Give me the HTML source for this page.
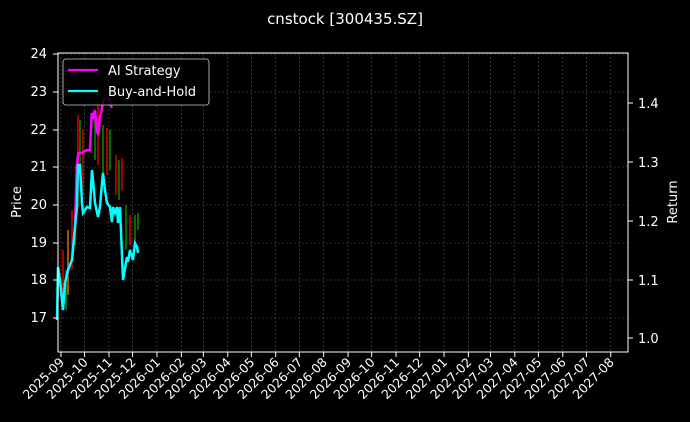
<html><head><style>body{margin:0;background:#000;}svg{display:block}</style></head><body>
<svg width="690" height="422" xmlns="http://www.w3.org/2000/svg" font-family="'DejaVu Sans','Liberation Sans',sans-serif" fill="#fff">
<rect width="690" height="422" fill="#000"/>
<text x="345" y="24" font-size="15" text-anchor="middle">cnstock [300435.SZ]</text>
<g stroke="#555" stroke-width="0.6" stroke-dasharray="2,2">
<line x1="58" x2="628" y1="54" y2="54"/><line x1="58" x2="628" y1="92" y2="92"/><line x1="58" x2="628" y1="130" y2="130"/><line x1="58" x2="628" y1="167" y2="167"/><line x1="58" x2="628" y1="205" y2="205"/><line x1="58" x2="628" y1="243" y2="243"/><line x1="58" x2="628" y1="280" y2="280"/><line x1="58" x2="628" y1="318" y2="318"/>
</g>
<g id="vg" stroke="#555" stroke-width="0.6" stroke-dasharray="2,2"></g>
<g stroke-width="1.6">
<line x1="72" y1="270" x2="72" y2="210" stroke="#c00"/><line x1="75" y1="245" x2="75" y2="205" stroke="#080"/><line x1="78" y1="175" x2="78" y2="115" stroke="#c00"/><line x1="80" y1="170" x2="80" y2="120" stroke="#080"/><line x1="83" y1="195" x2="83" y2="130" stroke="#c00"/><line x1="95" y1="160" x2="95" y2="110" stroke="#080"/><line x1="98" y1="165" x2="98" y2="100" stroke="#c00"/><line x1="103" y1="180" x2="103" y2="125" stroke="#080"/><line x1="107" y1="175" x2="107" y2="128" stroke="#c00"/><line x1="110" y1="170" x2="110" y2="130" stroke="#080"/><line x1="116" y1="195" x2="116" y2="155" stroke="#c00"/><line x1="119" y1="200" x2="119" y2="160" stroke="#080"/><line x1="122" y1="190" x2="122" y2="158" stroke="#c00"/><line x1="126" y1="250" x2="126" y2="205" stroke="#080"/><line x1="130" y1="245" x2="130" y2="215" stroke="#c00"/><line x1="135" y1="240" x2="135" y2="215" stroke="#080"/><line x1="138" y1="230" x2="138" y2="213" stroke="#080"/><line x1="63" y1="300" x2="63" y2="250" stroke="#c00"/><line x1="66" y1="310" x2="66" y2="270" stroke="#080"/><line x1="68" y1="295" x2="68" y2="230" stroke="#c60"/>
</g>
<polyline fill="none" stroke="#f0f" stroke-width="2.5" points="58,272 60,280 63,310 65,283 68,270 72,260 75,227 76.7,167 78.3,153 81.7,153 86.7,150 90,150 91.7,113 93.3,117 95,110 96.7,130 98.3,135 100,117 101.7,110 103.3,100 106.7,97 110,100 111.7,108"/>
<polyline fill="none" stroke="#0ff" stroke-width="2.5" points="57,320 58,267 60,280 63,310 65,283 68,270 72,260 75,227 77,207 78,165 80,165 82,203 83,213 87,207 90,208 92,170 93,180 95,203 98,217 100,207 102,183 103,173 105,190 107,203 110,207 112,222 113,207 115,213 117,207 118,223 120,207 123,280 127,257 128,262 130,250 133,260 135,243 137,247 138,253"/>
<rect x="63" y="59" width="146" height="46" rx="3" fill="#000" fill-opacity="0.85" stroke="#ccc" stroke-width="0.8"/>
<line x1="68" x2="98" y1="70" y2="70" stroke="#f0f" stroke-width="2.2"/>
<line x1="68" x2="98" y1="91" y2="91" stroke="#0ff" stroke-width="2.2"/>
<text x="108" y="75" font-size="13">AI Strategy</text>
<text x="108" y="96" font-size="13">Buy-and-Hold</text>
<rect x="58" y="53" width="570" height="299" fill="none" stroke="#fff" stroke-width="1"/>
<g font-size="13" text-anchor="end">
<text x="47" y="58">24</text><text x="47" y="96">23</text><text x="47" y="134">22</text><text x="47" y="171">21</text><text x="47" y="209">20</text><text x="47" y="247">19</text><text x="47" y="284">18</text><text x="47" y="322">17</text>
</g>
<g stroke="#fff"><line x1="53" x2="58" y1="54" y2="54"/><line x1="53" x2="58" y1="92" y2="92"/><line x1="53" x2="58" y1="130" y2="130"/><line x1="53" x2="58" y1="167" y2="167"/><line x1="53" x2="58" y1="205" y2="205"/><line x1="53" x2="58" y1="243" y2="243"/><line x1="53" x2="58" y1="280" y2="280"/><line x1="53" x2="58" y1="318" y2="318"/>
<line x1="628" x2="633" y1="103" y2="103"/><line x1="628" x2="633" y1="162" y2="162"/><line x1="628" x2="633" y1="221" y2="221"/><line x1="628" x2="633" y1="280" y2="280"/><line x1="628" x2="633" y1="338" y2="338"/></g>
<g font-size="13"><text x="638" y="108">1.4</text><text x="638" y="167">1.3</text><text x="638" y="226">1.2</text><text x="638" y="285">1.1</text><text x="638" y="343">1.0</text></g>
<text font-size="13" transform="translate(21,202) rotate(-90)" text-anchor="middle">Price</text>
<text font-size="13" transform="translate(677,202) rotate(-90)" text-anchor="middle">Return</text>
<g id="xt" font-size="12.5" text-anchor="end"></g>
<g id="tk" stroke="#fff"></g>
</svg>
<script>
var labs=["2025-09","2025-10","2025-11","2025-12","2026-01","2026-02","2026-03","2026-04","2026-05","2026-06","2026-07","2026-08","2026-09","2026-10","2026-11","2026-12","2027-01","2027-02","2027-03","2027-04","2027-05","2027-06","2027-07","2027-08"];
var days=[0,30,31,30,31,31,28,31,30,31,30,31,31,30,31,30,31,31,28,31,30,31,30,31];
var ns="http://www.w3.org/2000/svg",d=0,xt=document.getElementById("xt"),tk=document.getElementById("tk"),vg=document.getElementById("vg");
for(var i=0;i<labs.length;i++){d+=days[i];var x=61+d*0.7865;
var l=document.createElementNS(ns,"line");l.setAttribute("x1",x);l.setAttribute("x2",x);l.setAttribute("y1",352);l.setAttribute("y2",357);tk.appendChild(l);
var g=l.cloneNode();g.setAttribute("y1",53);g.setAttribute("y2",352);vg.appendChild(g);
var t=document.createElementNS(ns,"text");t.setAttribute("transform","translate("+(x+4)+",363) rotate(-45)");t.textContent=labs[i];xt.appendChild(t);}
</script>
</body></html>
